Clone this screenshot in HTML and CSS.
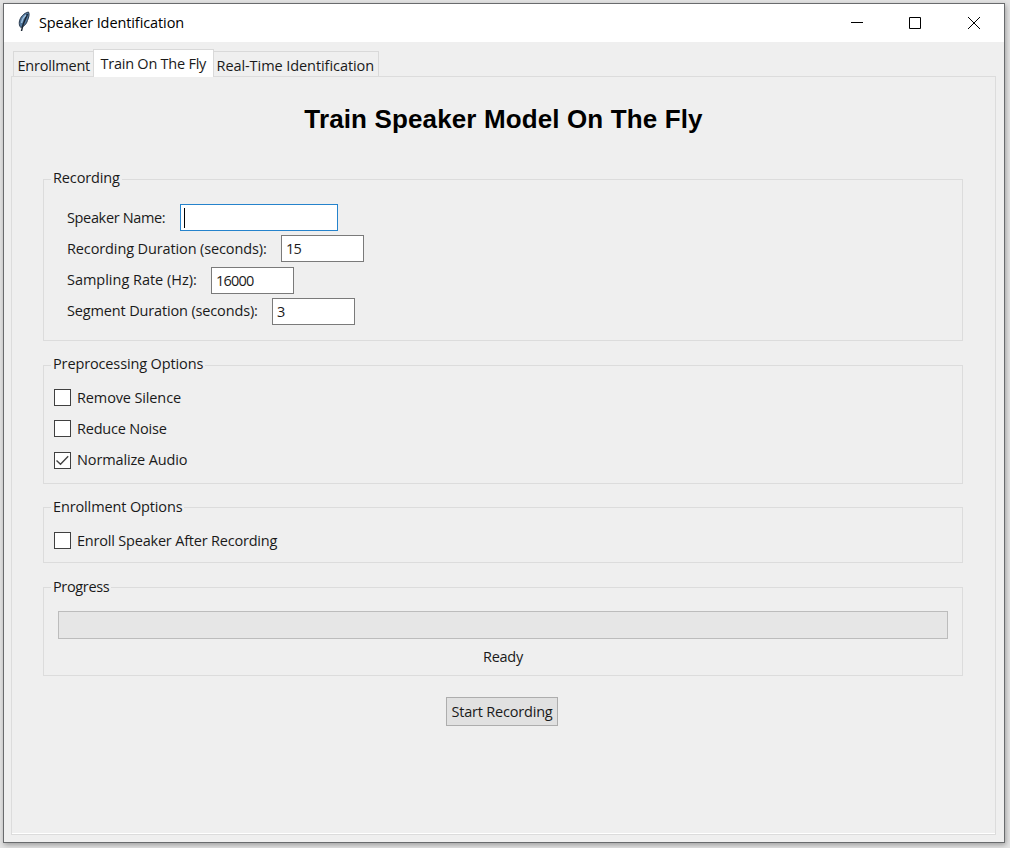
FILE: index.html
```html
<!DOCTYPE html>
<html lang="en">
<head>
<meta charset="utf-8">
<title>Speaker Identification</title>
<link rel="stylesheet" href="styles.css">
</head>
<body>
<main class="window">
  <header class="titlebar">
    <svg class="feather" width="14" height="22" viewBox="0 0 14 22"><path d="M11.500 1C7 2 3 6 2.300 11c-.2 2 .1 4 1.500 5.500 3-1 5.800-3.500 6.700-7C11.800 6.500 12.800 3 11.500 1Z" fill="#52799f" stroke="#29394d" stroke-width="1"/><path d="M10.500 3C8.500 8 6 11 4.500 20" fill="none" stroke="#1b2633" stroke-width="1.500"/><path d="M9 4C6.500 6 5 9 4.500 12" fill="none" stroke="#a1c2df" stroke-width="1.400"/></svg>
    <span class="caption">Speaker Identification</span>
    <div class="controls">
      <svg width="12" height="12" viewBox="0 0 12 12"><path d="M0 5.500h12"/></svg>
      <svg width="12" height="12" viewBox="0 0 12 12"><path d="M.5.500h11v11H.500z"/></svg>
      <svg width="12" height="12" viewBox="0 0 12 12"><path d="M0 0 12 12M12 0 0 12"/></svg>
    </div>
  </header>
  <nav class="tabs">
    <span class="tab tab-enroll">Enrollment</span>
    <span class="tab tab-active">Train On The Fly</span>
    <span class="tab tab-live">Real-Time Identification</span>
  </nav>
  <div class="pane">
    <h1 class="heading">Train Speaker Model On The Fly</h1>
    <section class="group group-recording">
      <h2 class="legend">Recording</h2>
      <div class="field"><span class="label w-name">Speaker Name:</span><span class="entry entry-name"><i class="caret"></i></span></div>
      <div class="field"><span class="label w-duration">Recording Duration (seconds):</span><span class="entry">15</span></div>
      <div class="field"><span class="label w-rate">Sampling Rate (Hz):</span><span class="entry">16000</span></div>
      <div class="field"><span class="label w-segment">Segment Duration (seconds):</span><span class="entry">3</span></div>
    </section>
    <section class="group group-pre">
      <h2 class="legend">Preprocessing Options</h2>
      <div class="option"><span class="box"></span><span>Remove Silence</span></div>
      <div class="option option-noise"><span class="box"></span><span>Reduce Noise</span></div>
      <div class="option"><span class="box"><svg width="15" height="15" viewBox="0 0 15 15"><path d="M1.500 7.500 5.500 11.300 13.200 3.200"/></svg></span><span>Normalize Audio</span></div>
    </section>
    <section class="group group-enroll">
      <h2 class="legend">Enrollment Options</h2>
      <div class="option option-enroll"><span class="box"></span><span>Enroll Speaker After Recording</span></div>
    </section>
    <section class="group group-progress">
      <h2 class="legend legend-progress">Progress</h2>
      <div class="progress"></div>
      <div class="status">Ready</div>
    </section>
    <span class="button">Start Recording</span>
  </div>
</main>
</body>
</html>
```
FILE: styles.css
```css
* { box-sizing: border-box; }
body {
  margin: 0;
  height: 848px;
  padding: 3px;
  overflow: hidden;
  background: #e3e3e3;
  color: #1a1a1a;
  font: 14.5px/20px "Open Sans", "Noto Sans", sans-serif;
  letter-spacing: -0.13px;
  white-space: nowrap;
}
.window {
  width: 1002px;
  height: 840px;
  border: 1px solid #696b6d;
  background: #efefef;
  box-shadow: 1px 2px 5px rgba(0, 0, 0, .3);
}
.titlebar {
  display: flex;
  align-items: center;
  height: 38px;
  padding: 0 24px 0 13px;
  background: #fff;
  color: #000;
}
.feather { margin-top: -2px; }
.caption { margin-left: 8px; letter-spacing: -0.1px; }
.controls { display: flex; gap: 47px; margin-left: auto; }
.controls svg:first-child { margin-right: -1px; }
.controls path { fill: none; stroke: #000; stroke-width: 1; }
.tabs { display: flex; align-items: flex-end; height: 34px; padding-left: 9px; }
.tab {
  height: 25px;
  padding: 4px 0 0 4px;
  border: 1px solid #d9d9d9;
  border-bottom: 0;
}
.tab-enroll { width: 80px; padding-left: 3.5px; border-right: 0; letter-spacing: -0.2px; }
.tab-active {
  width: 121px;
  height: 28px;
  margin-bottom: -1px;
  padding-left: 6.5px;
  background: #fff;
  letter-spacing: -0.24px;
  z-index: 1;
}
.tab-live { width: 165px; padding-left: 2.5px; border-left: 0; letter-spacing: -0.07px; }
.pane {
  display: flex;
  flex-direction: column;
  align-items: center;
  width: 985px;
  height: 759px;
  margin-left: 7px;
  border: 1px solid #dcdcdc;
  box-shadow: inset 0 -1px #fff;
}
.heading {
  margin: 27px 0 44px;
  font: bold 26px/31px "Liberation Sans", Arial, sans-serif;
  letter-spacing: 0.13px;
  color: #000;
}
.group {
  position: relative;
  align-self: flex-start;
  width: 920px;
  margin-left: 31px;
  border: 1px solid #dcdcdc;
}
.legend {
  position: absolute;
  top: -11px;
  left: 7px;
  margin: 0;
  padding: 0 2px;
  background: #efefef;
  font: inherit;
}
.legend-progress { letter-spacing: -0.35px; }
.group-recording { height: 162px; padding: 24px 0 0 23px; margin-bottom: 24px; }
.group-recording .legend, .group-pre .legend { top: -12px; }
.group-pre { height: 119px; padding: 16px 0 0 10px; margin-bottom: 23px; }
.group-enroll { height: 56px; padding: 17px 0 0 10px; margin-bottom: 24px; }
.group-progress { height: 89px; padding: 23px 14px 0; margin-bottom: 21px; }
.field { display: flex; align-items: center; height: 27px; margin-bottom: 4.3px; }
.w-name { width: 113px; letter-spacing: -0.35px; }
.w-duration { width: 214px; letter-spacing: -0.12px; }
.w-rate { width: 144px; letter-spacing: -0.02px; }
.w-segment { width: 205px; letter-spacing: -0.15px; }
.entry {
  width: 83px;
  height: 27px;
  padding: 3px 0 0 4px;
  border: 1px solid #7a7a7a;
  background: #fff;
  letter-spacing: -0.8px;
}
.entry-name { width: 158px; padding-left: 3px; border-color: #2583cc; }
.caret { display: block; width: 1px; height: 20px; background: #000; }
.option { display: flex; align-items: center; gap: 6px; height: 31.3px; }
.option-noise, .option-enroll { letter-spacing: -0.2px; }
.box { width: 17px; height: 17px; border: 1px solid #404040; background: #fff; }
.box svg { display: block; }
.box path { fill: none; stroke: #444; stroke-width: 1.4; }
.progress { height: 28px; border: 1px solid #bcbcbc; background: #e6e6e6; }
.status { margin-top: 8px; text-align: center; letter-spacing: -0.25px; }
.button {
  width: 112px;
  height: 29px;
  margin-right: 3px;
  padding-top: 4px;
  border: 1px solid #adadad;
  background: #e1e1e1;
  text-align: center;
  letter-spacing: -0.2px;
}
```
